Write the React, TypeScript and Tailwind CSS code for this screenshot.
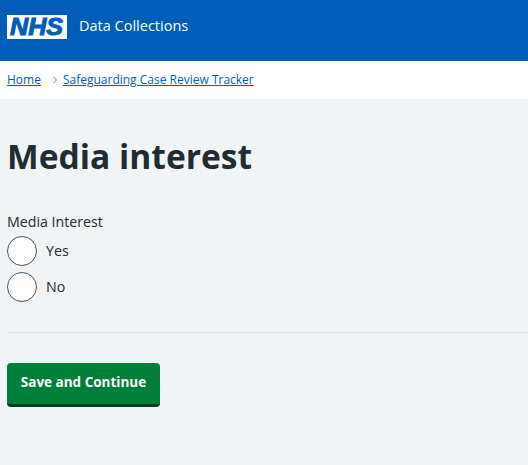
function Radio({ label }: { label: string }) {
  return (
    <label className="flex items-center h-[30px]">
      <span className="w-[30px] h-[30px] rounded-full border border-[#425563] bg-white shrink-0"></span>
      <span className="ml-[9px] text-[14.2px] text-[#212b32]">{label}</span>
    </label>
  )
}

export default function App() {
  return (
    <div className="min-h-[465px] bg-[#f0f4f5] overflow-hidden font-['Open_Sans','Noto_Sans',sans-serif] text-[#212b32]">
      <header className="bg-[#005eb8] h-[61px] flex items-start pl-[7px] pt-[15px]">
        <svg width="60" height="24" viewBox="0 0 60 24" className="shrink-0">
          <rect width="60" height="24" fill="#fff" />
          <text x="3" y="20" fontFamily="Liberation Sans, Arial, sans-serif" fontStyle="italic" fontWeight="700" fontSize="23" fill="#005eb8" stroke="#005eb8" strokeWidth="1" textLength="53" lengthAdjust="spacingAndGlyphs">NHS</text>
        </svg>
        <span className="ml-3 text-[14.5px] text-white leading-[22px]">Data Collections</span>
      </header>
      <nav className="bg-white h-[38px] flex items-center pl-[7px] text-[12px] text-[#005eb8]">
        <a className="underline" href="#">Home</a>
        <svg width="6" height="8" viewBox="0 0 6 8" className="ml-[11px] mr-[5px]" fill="none" stroke="#768692" strokeWidth="1">
          <path d="M1.5 1l3 3-3 3" />
        </svg>
        <a className="underline" href="#">Safeguarding Case Review Tracker</a>
      </nav>
      <main className="px-[7px]">
        <h1 className="mt-[34px] text-[33.6px] leading-[46px] font-bold">Media interest</h1>
        <div className="mt-[33px] text-[14.2px] leading-[20px]">Media Interest</div>
        <div className="flex flex-col gap-[6px] mt-[4px]">
          <Radio label="Yes" />
          <Radio label="No" />
        </div>
      </main>
      <hr className="ml-[7px] mt-[30px] border-[#d8dde0]" />
      <div className="px-[7px] mt-[30px]">
        <button className="w-[153px] h-[44px] pb-[2px] bg-[#007f3b] rounded-[4px] border-b-[3px] border-[#00401e] text-white font-bold text-[13.5px]">
          Save and Continue
        </button>
      </div>
    </div>
  )
}
